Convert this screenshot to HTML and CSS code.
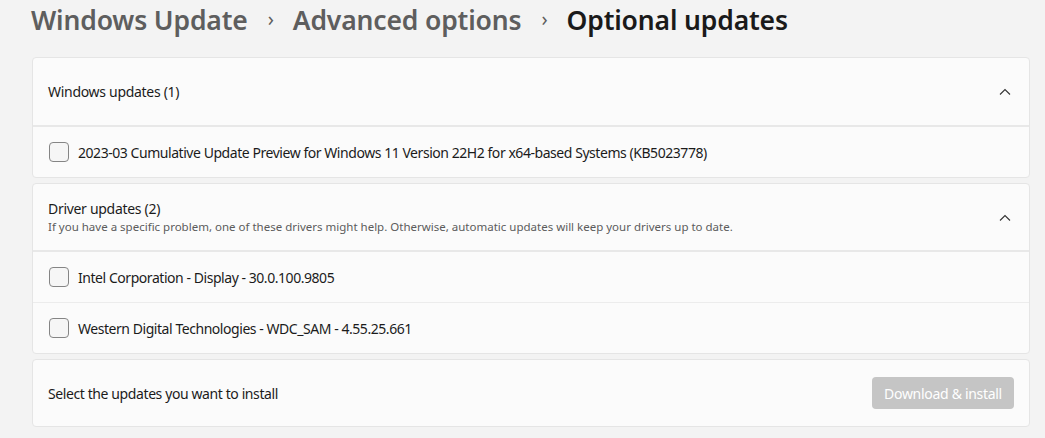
FILE: index.html
```html
<!DOCTYPE html>
<html>
<head>
<meta charset="utf-8">
<link rel="stylesheet" href="styles.css">
</head>
<body>
<div class="page">
  <h1 class="crumbs">
    <span class="crumb">Windows Update</span>
    <span class="sep">&#x203A;</span>
    <span class="crumb">Advanced options</span>
    <span class="sep">&#x203A;</span>
    <span class="crumb current">Optional updates</span>
  </h1>

  <section class="card">
    <div class="card-head">
      <div class="head-text">
        <div class="head-title">Windows updates (1)</div>
      </div>
      <svg class="chev" width="12" height="8" viewBox="0 0 12 8"><path d="M1 6.5 L6 1.5 L11 6.5" fill="none" stroke="#333" stroke-width="1.1"/></svg>
    </div>
    <div class="row"><span class="box"></span><span>2023-03 Cumulative Update Preview for Windows 11 Version 22H2 for x64-based Systems (KB5023778)</span></div>
  </section>

  <section class="card">
    <div class="card-head">
      <div class="head-text">
        <div class="head-title">Driver updates (2)</div>
        <div class="head-sub">If you have a specific problem, one of these drivers might help. Otherwise, automatic updates will keep your drivers up to date.</div>
      </div>
      <svg class="chev" width="12" height="8" viewBox="0 0 12 8"><path d="M1 6.5 L6 1.5 L11 6.5" fill="none" stroke="#333" stroke-width="1.1"/></svg>
    </div>
    <div class="row"><span class="box"></span><span>Intel Corporation - Display - 30.0.100.9805</span></div>
    <div class="row sep-top"><span class="box"></span><span>Western Digital Technologies - WDC_SAM - 4.55.25.661</span></div>
  </section>

  <section class="card footer">
    <span>Select the updates you want to install</span>
    <button class="btn" disabled>Download &amp; install</button>
  </section>
</div>
</body>
</html>
```
FILE: styles.css
```css
html, body {
  margin: 0;
  padding: 0;
  background: #f3f3f3;
}
body {
  font-family: "Noto Sans", "Open Sans", sans-serif;
  color: #1b1b1b;
  font-size: 14px;
}
.page {
  padding: 0 15px 0 32px;
  display: flex;
  flex-direction: column;
}
.crumbs {
  margin: 0;
  height: 57px;
  display: flex;
  align-items: flex-start;
  font-weight: 600;
  font-size: 26.5px;
  line-height: 40px;
  margin-left: -1px;
  letter-spacing: -0.15px;
}
.crumb { color: #5e5e5e; }
.crumb.current { color: #1a1a1a; }
.sep {
  color: #5e5e5e;
  font-size: 20px;
  font-weight: 400;
  padding: 0 19px 0 20px;
  position: relative;
  top: -1px;
}
.card {
  background: #fbfbfb;
  border: 1px solid #e5e5e5;
  border-radius: 4px;
  margin-bottom: 5px;
}
.card-head {
  height: 67px;
  display: flex;
  align-items: center;
  padding: 0 18px 0 15px;
  border-bottom: 2px solid #e8e8e8;
}
.card:nth-of-type(2) .card-head { height: 66px; }
.head-text { flex: 1; }
.head-title { font-size: 14px; line-height: 18px; letter-spacing: -0.3px; }
.head-sub { font-size: 11.5px; line-height: 16px; color: #5c5c5c; margin-top: 1px; }
.chev { margin-top: 1px; }
.row {
  height: 50px;
  display: flex;
  align-items: center;
  gap: 9px;
  padding: 0 16px;
  letter-spacing: -0.45px;
}
.row.sep-top { border-top: 1px solid #ececec; height: 50px; }
.box {
  width: 18px;
  height: 18px;
  border: 1px solid #858585;
  border-radius: 4px;
  background: #f6f6f6;
  flex: none;
}
.footer {
  height: 66px;
  display: flex;
  align-items: center;
  justify-content: space-between;
  padding: 0 15px;
  letter-spacing: -0.4px;
}
.btn {
  width: 142px;
  height: 32px;
  border: none;
  border-radius: 4px;
  background: #c5c5c5;
  color: #ffffff;
  font-family: "Noto Sans", "Open Sans", sans-serif;
  font-size: 14px;
  letter-spacing: -0.3px;
  padding: 0;
}
```
